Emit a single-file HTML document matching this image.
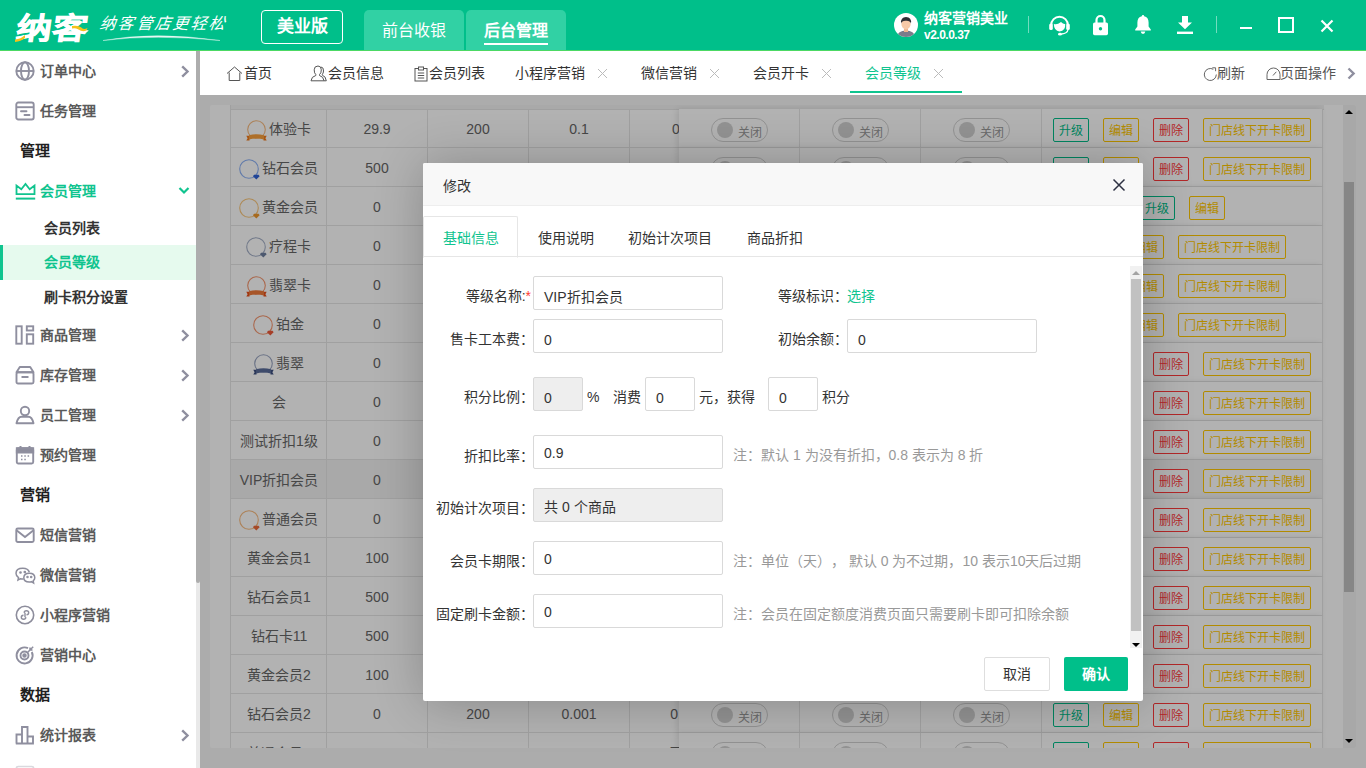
<!DOCTYPE html>
<html lang="zh-CN">
<head>
<meta charset="utf-8">
<title>纳客</title>
<style>
*{box-sizing:border-box;margin:0;padding:0}
html,body{width:1366px;height:768px;overflow:hidden;background:#fff}
body{font-family:"Liberation Sans",sans-serif;font-size:14px;color:#333;position:relative;text-spacing-trim:space-all}
a{text-decoration:none;color:inherit}
i,em{font-style:normal}
.abs{position:absolute}

/* ---------- header ---------- */
#hd{position:absolute;left:0;top:0;width:1366px;height:51px;background:#00bf8a;border-bottom:1px solid #4cd964;color:#fff}
#logo{position:absolute;left:14px;top:11px;-webkit-text-stroke:.7px #fff;font-size:30px;font-weight:900;letter-spacing:0;line-height:36px;transform:scaleX(1.18) skewX(-7deg);transform-origin:left bottom}
#slogan{position:absolute;left:100px;top:13px;font-size:16px;letter-spacing:2.2px;line-height:22px;font-style:italic;font-weight:300;transform:skewX(-8deg)}
#ver{position:absolute;left:261px;top:10px;width:82px;height:34px;border:1px solid #fff;border-radius:4px;text-align:center;line-height:32px;font-size:17px;font-weight:bold}
.htab{position:absolute;top:10px;height:40px;width:100px;background:#31d1a4;border-radius:5px 5px 0 0;text-align:center;font-size:16px;line-height:41px}
#uname{position:absolute;left:924px;top:10px;font-size:14px;line-height:17px;font-weight:bold}
#uver{position:absolute;left:924px;top:28px;font-size:12px;line-height:14px;font-weight:bold;letter-spacing:-.5px}
.vdiv{position:absolute;top:16px;width:1px;height:17px;background:rgba(255,255,255,.45)}

/* ---------- sidebar ---------- */
#side{position:absolute;left:0;top:51px;width:196px;height:717px;background:#fff;overflow:hidden}
#sbar{position:absolute;left:196px;top:51px;width:4px;height:717px;background:#e9e9e9}
#sbar i{position:absolute;left:0;top:0;width:4px;height:532px;background:#adadad;border-radius:0 0 2px 2px}
.mi{position:absolute;left:0;width:196px;height:40px;line-height:40px;font-weight:bold;color:#5a5a5a;font-size:14px}
.mi svg.ic{position:absolute;left:15px;top:10px}
.mi span{position:absolute;left:40px;top:0}
.mi svg.ar{position:absolute;left:180px;top:14px}
.mh{position:absolute;left:20px;height:40px;line-height:40px;font-weight:bold;font-size:15px;color:#1f1f1f}
.sm{position:absolute;left:0;width:196px;height:35px;line-height:35px;font-weight:bold;color:#333;padding-left:44px}
.sm.on{background:#e6faee;color:#10c48f;border-left:3px solid #10c48f;padding-left:41px}

/* ---------- tab bar ---------- */
#tabs{position:absolute;left:200px;top:51px;width:1166px;height:44px;background:#fff;color:#333}
.tb{position:absolute;top:0;height:44px;line-height:44px;font-size:14px;white-space:nowrap}
.tb svg{position:absolute}
.tx{position:absolute;top:17px}

/* ---------- content ---------- */
#content{position:absolute;left:200px;top:95px;width:1166px;height:673px;background:#f7f7f7;overflow:hidden}
#card{position:absolute;left:10px;top:10px;width:1146px;height:643px;background:#fff;overflow:hidden;border-radius:2px}
#tbl{position:absolute;left:20px;top:0;width:1093px;height:643px;border-left:1px solid #e6e6e6}
#tbl:before{content:"";position:absolute;left:0;top:0;width:1093px;height:4px;border-bottom:1px solid #e6e6e6;background:#f2f2f2}
.tr{position:absolute;left:0;width:1092px;height:39px}
.tr.hl{background:#f2f2f2}
.td{position:absolute;top:0;height:39px;border-right:1px solid #e6e6e6;border-bottom:1px solid #e6e6e6;text-align:center;line-height:38px;color:#666;font-size:14px;white-space:nowrap;overflow:hidden}
.c2,.c3,.c4,.c5{line-height:40px}
.c1{left:0;width:96px}.c2{left:96px;width:101px}.c3{left:197px;width:101px}.c4{left:298px;width:101px}.c5{left:399px;width:93px}
.fx{position:absolute;left:448px;top:0;width:644px;height:39px;background:#fff;box-shadow:-2px 0 6px rgba(0,0,0,.10)}
.hl .fx{background:#f2f2f2}
.s1{left:0;width:121px}.s2{left:121px;width:121px}.s3{left:242px;width:121px}.op{left:363px;width:281px}
.lv{vertical-align:middle;margin-right:1px;position:relative;top:1px}
.c1 span{vertical-align:middle;margin-left:1px}
.sw{display:inline-block;position:relative;width:57px;height:24px;border:1px solid #d2d2d2;border-radius:12px;background:#fff;vertical-align:middle;top:1px}
.sw i{position:absolute;left:5px;top:3px;width:16px;height:16px;border-radius:50%;background:#d2d2d2}
.sw em{position:absolute;left:26px;top:3px;line-height:22px;font-size:12px;color:#999}
.b{display:inline-block;height:24px;line-height:24px;padding:0 5px;font-size:12px;border:1px solid;border-radius:2px;margin:0 7px;vertical-align:middle;background:#fff;position:relative;top:1px}
.b.g{color:#00bf8a;border-color:#00bf8a}
.b.y{color:#ffc800;border-color:#ffc800}
.b.r{color:#ff3a3c;border-color:#ff3a3c}
#vs{position:absolute;left:1133px;top:0;width:13px;height:643px;background:#f1f1f1}
#vs .th{position:absolute;left:1px;top:77px;width:10px;height:410px;background:#c1c1c1}
#vs .up{position:absolute;left:2px;top:5px;width:0;height:0;border:4px solid transparent;border-bottom:4px solid #000;border-top:0}
#vs .dn{position:absolute;left:2px;top:634px;width:0;height:0;border:4px solid transparent;border-top:4px solid #000;border-bottom:0}
#shade{position:absolute;left:200px;top:95px;width:1166px;height:673px;background:rgba(0,0,0,.3)}

/* ---------- modal ---------- */
#modal{position:absolute;left:423px;top:163px;width:720px;height:538px;background:#fff;border-radius:2px;box-shadow:1px 1px 50px rgba(0,0,0,.24)}
#mt{position:absolute;left:0;top:0;width:720px;height:43px;background:#f8f8f8;border-bottom:1px solid #eee;border-radius:2px 2px 0 0;line-height:46px;padding-left:20px;color:#333;font-size:14px}
#mtabs{position:absolute;left:0;top:53px;width:720px;height:41px;border-bottom:1px solid #e6e6e6}
#mtabs .on{position:absolute;left:0;top:0;width:95px;height:42px;border:1px solid #e6e6e6;border-bottom-color:#fff;border-radius:2px 2px 0 0}
#mtabs span{position:absolute;top:0;line-height:44px;font-size:14px;color:#333;white-space:nowrap}
.lb{position:absolute;width:110px;text-align:right;font-size:14px;color:#333;line-height:20px;white-space:nowrap}
.in{position:absolute;height:34px;border:1px solid #d9d9d9;border-radius:2px;background:#fff;padding-left:10px;line-height:40px;font-size:14px;color:#333;white-space:nowrap}
.in.dis{background:#eee}
.t{position:absolute;font-size:14px;line-height:20px;white-space:nowrap;color:#333}
.note{color:#999}
#ms{position:absolute;left:707px;top:103px;width:12px;height:382px;background:#f1f1f1}
#ms .th{position:absolute;left:1px;top:13px;width:10px;height:352px;background:#c1c1c1}
#ms .up{position:absolute;left:2px;top:5px;width:0;height:0;border:4px solid transparent;border-bottom:4px solid #a3a3a3;border-top:0}
#ms .dn{position:absolute;left:2px;top:377px;width:0;height:0;border:4px solid transparent;border-top:4px solid #000;border-bottom:0}
.mb{position:absolute;top:494px;height:34px;border-radius:2px;text-align:center;line-height:33px;font-size:14px}
</style>
</head>
<body>

<!-- ================= HEADER ================= -->
<div id="hd">
  <div id="logo">纳客</div>
  <svg class="abs" style="left:12px;top:19px" width="80" height="26" viewBox="0 0 80 26"><path d="M3 20.500 Q9 20 13 16 L13 19 Q9 22.500 3 23 Z" fill="#f5c21b"/><path d="M60 7 Q67 6 70.500 9.500 Q72.500 10.500 75.500 9 L74.500 11.500 Q70.500 13.500 66.500 10.500 Q63.500 8.500 60 9.500 Z" fill="#f5c21b"/></svg>
  <div id="slogan">纳客管店更轻松</div>
  <svg class="abs" style="left:100px;top:34px" width="125" height="9" viewBox="0 0 125 9"><path d="M3 6.5 Q55 -3 120 6.5 Q55 0 3 6.5 Z" fill="#fff" stroke="#fff" stroke-width=".4" opacity=".9"/></svg>
  <div id="ver">美业版</div>
  <div class="htab" style="left:364px">前台收银</div>
  <div class="htab" style="left:466px;width:100px;font-weight:bold;font-size:16px"><span style="display:inline-block;height:35px;border-bottom:2px solid #fff">后台管理</span></div>

  <!-- avatar -->
  <svg class="abs" style="left:894px;top:13px" width="24" height="24" viewBox="0 0 24 24">
    <defs><clipPath id="avc"><circle cx="12" cy="12" r="12"/></clipPath></defs>
    <circle cx="12" cy="12" r="12" fill="#fff"/>
    <g clip-path="url(#avc)">
      <path d="M3 25 Q3 17.5 12 17.5 Q21 17.5 21 25 Z" fill="#7b7b8b"/>
      <rect x="10" y="14" width="4" height="5" fill="#f0b48f"/>
      <ellipse cx="12" cy="11" rx="4.6" ry="5.4" fill="#f7c9a8"/>
      <path d="M7 10.5 Q6.5 4 12 4 Q17.8 4 17 10.5 Q16 7.5 12 7.8 Q8 7.5 7 10.5 Z" fill="#2e2e35"/>
    </g>
  </svg>
  <div id="uname">纳客营销美业</div>
  <div id="uver">v2.0.0.37</div>
  <div class="vdiv" style="left:1028px"></div>

  <!-- headset -->
  <svg class="abs" style="left:1048px;top:13px" width="23" height="24" viewBox="0 0 23 24">
    <path d="M3.2 12 A8.3 8.3 0 0 1 19.8 12" fill="none" stroke="#fff" stroke-width="2"/>
    <rect x="1.2" y="10.5" width="3.6" height="6.5" rx="1.6" fill="#fff"/>
    <rect x="18.2" y="10.5" width="3.6" height="6.5" rx="1.6" fill="#fff"/>
    <path d="M5.8 10.8 Q8.5 12.5 13 9 Q15.5 11.5 17.2 11 Q17.8 17.8 11.5 18.6 Q6 18 5.8 10.8 Z" fill="#fff"/>
    <path d="M20 16.5 Q19.5 20.5 13.5 21" fill="none" stroke="#fff" stroke-width="1.3"/>
    <ellipse cx="12" cy="21.2" rx="2" ry="1.4" fill="#fff"/>
  </svg>
  <!-- lock -->
  <svg class="abs" style="left:1092px;top:14px" width="17" height="22" viewBox="0 0 17 22">
    <path d="M4.5 9 V6 A4 4 0 0 1 12.500 6 V9" fill="none" stroke="#fff" stroke-width="2.2"/>
    <rect x="1" y="8.600" width="15" height="12.6" rx="1.6" fill="#fff"/>
    <circle cx="8.5" cy="14.8" r="1.7" fill="#00bf8a"/>
  </svg>
  <!-- bell -->
  <svg class="abs" style="left:1134px;top:14px" width="18" height="21" viewBox="0 0 18 21">
    <path d="M9 1 Q10.2 1 10.2 2.300 Q14.6 3.400 14.600 8.500 V12.500 L16.800 15.600 V16.400 H1.200 V15.600 L3.400 12.500 V8.500 Q3.400 3.400 7.800 2.300 Q7.800 1 9 1 Z" fill="#fff"/>
    <path d="M6.700 17.600 H11.300 Q11 20 9 20 Q7 20 6.700 17.600 Z" fill="#fff"/>
  </svg>
  <!-- download -->
  <svg class="abs" style="left:1176px;top:15px" width="18" height="20" viewBox="0 0 18 20">
    <path d="M6 1 H12 V7.500 H16 L9 14.200 L2 7.500 H6 Z" fill="#fff"/>
    <rect x="1" y="16.600" width="16" height="2.400" fill="#fff"/>
  </svg>
  <div class="vdiv" style="left:1216px"></div>
  <div class="abs" style="left:1240px;top:27px;width:12px;height:2px;background:#fff"></div>
  <div class="abs" style="left:1278px;top:17px;width:16px;height:16px;border:2px solid #fff"></div>
  <svg class="abs" style="left:1320px;top:19px" width="14" height="14" viewBox="0 0 14 14"><path d="M1.500 1.500 L12.500 12.500 M12.500 1.500 L1.500 12.500" stroke="#fff" stroke-width="2.200"/></svg>
</div>

<!-- ================= SIDEBAR ================= -->
<div id="side">
  <div class="mi" style="top:0"><svg class="ic" width="20" height="20" viewBox="0 0 20 20" fill="none" stroke="#8f8f9f" stroke-width="1.900"><circle cx="10" cy="10" r="8.700"/><path d="M1.500 10 H18.500"/><ellipse cx="10" cy="10" rx="4" ry="8.700"/></svg><span>订单中心</span><svg class="ar" width="10" height="13" viewBox="0 0 10 13"><path d="M2.200 1.400 L7.500 6.500 L2.200 11.600" fill="none" stroke="#8f8f9f" stroke-width="2.400"/></svg></div>
  <div class="mi" style="top:40px"><svg class="ic" width="20" height="20" viewBox="0 0 20 20" fill="none" stroke="#8f8f9f" stroke-width="1.900"><rect x="1.300" y="1.500" width="17.400" height="17" rx="2"/><path d="M1.300 6.200 H18.700"/><path d="M6 10.300 H11.500 M9.500 14 H14.500" stroke-width="1.900" stroke-linecap="round"/></svg><span>任务管理</span></div>
  <div class="mh" style="top:80px">管理</div>
  <div class="mi" style="top:120px;color:#10c48f"><svg class="ic" width="21" height="20" viewBox="0 0 21 20" fill="none" stroke="#10c48f" stroke-width="1.800"><path d="M1.500 13.200 V4.500 L6.300 8.300 L10.500 3 L14.700 8.300 L19.500 4.500 V13.200 Z" stroke-linejoin="miter"/><path d="M0.800 17.600 H20.200" stroke-width="2"/></svg><span>会员管理</span><svg class="ar" style="left:178px;top:15px" width="12" height="9" viewBox="0 0 12 9"><path d="M1.500 2 L6 6.500 L10.500 2" fill="none" stroke="#10c48f" stroke-width="2.200"/></svg></div>
  <div class="sm" style="top:160px">会员列表</div>
  <div class="sm on" style="top:194px">会员等级</div>
  <div class="sm" style="top:229px">刷卡积分设置</div>
  <div class="mi" style="top:264px"><svg class="ic" width="20" height="20" viewBox="0 0 20 20" fill="none" stroke="#8f8f9f" stroke-width="1.900"><rect x="1.300" y="1.300" width="5.400" height="17.400"/><rect x="11.800" y="1.300" width="6.400" height="4.200"/><rect x="11.800" y="9.300" width="6.400" height="9.400"/></svg><span>商品管理</span><svg class="ar" width="10" height="13" viewBox="0 0 10 13"><path d="M2.200 1.400 L7.500 6.500 L2.200 11.600" fill="none" stroke="#8f8f9f" stroke-width="2.400"/></svg></div>
  <div class="mi" style="top:304px"><svg class="ic" width="20" height="20" viewBox="0 0 20 20" fill="none" stroke="#8f8f9f" stroke-width="1.900"><path d="M1.500 7.200 L4.800 2 H15.200 L18.500 7.200 Z" stroke-linejoin="round"/><rect x="1.500" y="7.200" width="17" height="11.300" rx="1.500"/><path d="M6.500 12 H13.500" stroke-width="2"/></svg><span>库存管理</span><svg class="ar" width="10" height="13" viewBox="0 0 10 13"><path d="M2.200 1.400 L7.500 6.500 L2.200 11.600" fill="none" stroke="#8f8f9f" stroke-width="2.400"/></svg></div>
  <div class="mi" style="top:344px"><svg class="ic" width="20" height="20" viewBox="0 0 20 20" fill="none" stroke="#8f8f9f" stroke-width="1.900"><circle cx="10" cy="6" r="4.200"/><path d="M1.500 18.300 Q3 11.800 6.500 11.800 H13.500 Q17 11.800 18.500 18.300 Z" stroke-linejoin="round"/></svg><span>员工管理</span><svg class="ar" width="10" height="13" viewBox="0 0 10 13"><path d="M2.200 1.400 L7.500 6.500 L2.200 11.600" fill="none" stroke="#8f8f9f" stroke-width="2.400"/></svg></div>
  <div class="mi" style="top:384px"><svg class="ic" width="20" height="20" viewBox="0 0 20 20" fill="none" stroke="#8f8f9f" stroke-width="1.900"><rect x="1.800" y="3.200" width="16.400" height="15.300" rx="1.500"/><path d="M1.800 3.200 H18.200 V7.500 H1.800 Z" fill="#8d8d9c"/><path d="M5.500 1 V4 M14.500 1 V4" stroke-width="2"/><path d="M6 11 H7.500 M9.300 11 H10.800 M12.600 11 H14.100 M6 14.500 H7.500 M9.300 14.500 H10.800" stroke-width="1.600"/></svg><span>预约管理</span></div>
  <div class="mh" style="top:424px">营销</div>
  <div class="mi" style="top:464px"><svg class="ic" width="20" height="20" viewBox="0 0 20 20" fill="none" stroke="#8f8f9f" stroke-width="1.900"><rect x="1.300" y="3.500" width="17.400" height="13.500" rx="1.500"/><path d="M1.800 5.500 L10 12 L18.200 5.500"/></svg><span>短信营销</span></div>
  <div class="mi" style="top:504px"><svg class="ic" width="21" height="20" viewBox="0 0 21 20" fill="none" stroke="#8d8d9c" stroke-width="1.500"><path d="M8.500 14 Q6.800 14.200 5.500 13.700 L3 15 L3.500 12.600 Q1 10.800 1 8.200 Q1 3.200 7.800 3.200 Q13.200 3.200 14.300 7.200"/><path d="M19.800 12.800 Q19.800 8.200 14.300 8.200 Q8.800 8.200 8.800 12.800 Q8.800 17 14.300 17 Q15.500 17 16.300 16.700 L18.600 18 L18.200 15.800 Q19.800 14.600 19.800 12.800 Z"/><circle cx="5.500" cy="7.500" r=".6" fill="#8d8d9c"/><circle cx="9.800" cy="7" r=".6" fill="#8d8d9c"/><circle cx="12.500" cy="12" r=".5" fill="#8d8d9c"/><circle cx="16.200" cy="12" r=".5" fill="#8d8d9c"/></svg><span>微信营销</span></div>
  <div class="mi" style="top:544px"><svg class="ic" width="20" height="20" viewBox="0 0 20 20" fill="none" stroke="#8d8d9c" stroke-width="1.600"><circle cx="10" cy="10" r="8.700"/><path d="M10.800 12.300 Q10.800 14.200 8.600 14.200 Q6.300 14.200 6.300 12.300 Q6.300 10.500 8.500 10.300 M9.200 7.700 Q9.200 5.800 11.400 5.800 Q13.700 5.800 13.700 7.700 Q13.700 9.500 11.500 9.700 M10 7.700 V12.300" stroke-width="1.400"/></svg><span>小程序营销</span></div>
  <div class="mi" style="top:584px"><svg class="ic" width="20" height="20" viewBox="0 0 20 20" fill="none" stroke="#8f8f9f" stroke-width="1.900"><path d="M16.800 7 A8 8 0 1 1 13 3.200"/><circle cx="9.500" cy="10.500" r="4"/><circle cx="9.500" cy="10.500" r="1.300" fill="#8d8d9c"/><path d="M12.500 7.500 L18.200 1.800 M15 5 L15 2.500 M15 5 L17.500 5" stroke-width="1.500"/></svg><span>营销中心</span></div>
  <div class="mh" style="top:624px">数据</div>
  <div class="mi" style="top:664px"><svg class="ic" width="20" height="20" viewBox="0 0 20 20" fill="none" stroke="#8f8f9f" stroke-width="1.900"><path d="M1.500 18.500 V9.500 H7 V18.500 M7 18.500 V2 H12.500 V18.500 M12.500 18.500 V11.500 H18 V18.500 M0.800 18.500 H18.900"/></svg><span>统计报表</span><svg class="ar" width="10" height="13" viewBox="0 0 10 13"><path d="M2.200 1.400 L7.500 6.500 L2.200 11.600" fill="none" stroke="#8f8f9f" stroke-width="2.400"/></svg></div>
  <div class="mi" style="top:704px"><svg class="ic" width="20" height="20" viewBox="0 0 20 20" fill="none" stroke="#d9d9de" stroke-width="1.700"><rect x="1.300" y="1.500" width="17.400" height="17" rx="2"/></svg></div>
</div>
<div id="sbar"><i></i></div>

<!-- ================= TAB BAR ================= -->
<div id="tabs">
  <div class="tb" style="left:26px"><svg style="left:0;top:15px" width="17" height="16" viewBox="0 0 17 16" fill="none" stroke="#555" stroke-width="1"><path d="M1 7.500 L8.500 1 L16 7.500"/><path d="M3.200 6.500 V14.500 H13.800 V6.500"/></svg><span style="margin-left:18px">首页</span></div>
  <div class="tb" style="left:110px"><svg style="left:0;top:14px" width="17" height="17" viewBox="0 0 17 17" fill="none" stroke="#555" stroke-width="1"><path d="M8 1 Q11.300 1 11.300 4.800 Q11.300 8.500 9.500 9.500 V10.500 Q13.500 11.500 14 15.800 H1 Q1.500 11.500 5.800 10.500 V9.500 Q4.200 8.500 4.200 4.800 Q4.200 1 8 1 Z"/><path d="M11 2 Q13.800 2.300 13.500 6 Q13.300 8.500 12.300 9.300 V10.200 Q15.800 11.200 16.300 15.800 H14"/></svg><span style="margin-left:18px">会员信息</span></div>
  <div class="tb" style="left:214px"><svg style="left:0;top:15px" width="14" height="16" viewBox="0 0 14 16" fill="none" stroke="#555" stroke-width="1"><rect x="1" y="2.500" width="12" height="12.500"/><rect x="4.500" y="1" width="5" height="3" fill="#fff"/><path d="M3.800 7 H10.200 M3.800 9.500 H10.200 M3.800 12 H10.200"/></svg><span style="margin-left:15px">会员列表</span></div>
  <div class="tb" style="left:315px">小程序营销</div><svg class="tx" style="left:397px" width="11" height="11" viewBox="0 0 11 11"><path d="M1 1 L10 10 M10 1 L1 10" stroke="#bbb" stroke-width="1"/></svg>
  <div class="tb" style="left:441px">微信营销</div><svg class="tx" style="left:509px" width="11" height="11" viewBox="0 0 11 11"><path d="M1 1 L10 10 M10 1 L1 10" stroke="#bbb" stroke-width="1"/></svg>
  <div class="tb" style="left:553px">会员开卡</div><svg class="tx" style="left:621px" width="11" height="11" viewBox="0 0 11 11"><path d="M1 1 L10 10 M10 1 L1 10" stroke="#bbb" stroke-width="1"/></svg>
  <div class="tb" style="left:665px;color:#10c48f">会员等级</div><svg class="tx" style="left:733px" width="11" height="11" viewBox="0 0 11 11"><path d="M1 1 L10 10 M10 1 L1 10" stroke="#bbb" stroke-width="1"/></svg>
  <div class="abs" style="left:650px;top:40px;width:112px;height:2px;background:#10c48f"></div>
  <div class="tb" style="left:1004px;color:#555"><svg style="left:-1px;top:16px" width="15" height="15" viewBox="0 0 15 15" fill="none" stroke="#666" stroke-width="1"><path d="M13.300 7.500 A6 6 0 1 1 10.300 2.300"/><path d="M9.300 0.800 H12.600 V4.200" /></svg><span style="margin-left:13px">刷新</span></div>
  <div class="tb" style="left:1066px;color:#555"><svg style="left:0;top:16px" width="15" height="14" viewBox="0 0 15 14" fill="none" stroke="#666" stroke-width="1"><path d="M1 12.500 V7.500 A6.500 6.500 0 0 1 14 7.500 V12.500 Z" stroke-linejoin="round"/><path d="M7 8.500 L10.300 4.800"/></svg><span style="margin-left:14px">页面操作</span></div>
  <svg class="abs" style="left:1146px;top:16px" width="10" height="13" viewBox="0 0 10 13"><path d="M2.500 1.500 L7.600 6.500 L2.500 11.500" fill="none" stroke="#8f8f9f" stroke-width="2.400"/></svg>
</div>

<!-- ================= CONTENT ================= -->
<div id="content">
  <div id="card">
    <div id="tbl">
<div class="tr" style="top:4px"><div class="td c1"><svg class="lv" width="21" height="21" viewBox="0 0 21 21"><circle cx="10.5" cy="9.5" r="8.8" fill="none" stroke="#f5a95f" stroke-width="1.1" stroke-opacity=".8"/><path d="M0.3 15.8 L3.5 15.8 L3.5 20.6 L0.3 20.6 L1.6 18.2 Z M20.7 15.8 L17.5 15.8 L17.5 20.6 L20.7 20.6 L19.4 18.2 Z" fill="#f07a1c"/><path d="M3 15.2 Q10.5 13.2 18 15.2 L18 19.6 Q10.5 17.6 3 19.6 Z" fill="#f9a03c"/></svg><span>体验卡</span></div><div class="td c2">29.9</div><div class="td c3">200</div><div class="td c4">0.1</div><div class="td c5">0</div><div class="fx"><div class="td s1"><span class="sw"><i></i><em>关闭</em></span></div><div class="td s2"><span class="sw"><i></i><em>关闭</em></span></div><div class="td s3"><span class="sw"><i></i><em>关闭</em></span></div><div class="td op"><a class="b g">升级</a><a class="b y">编辑</a><a class="b r">删除</a><a class="b y w">门店线下开卡限制</a></div></div></div>
<div class="tr" style="top:43px"><div class="td c1"><svg class="lv" width="21" height="21" viewBox="0 0 21 21"><circle cx="10" cy="10" r="9.3" fill="none" stroke="#6f9cf0" stroke-width="1.1" stroke-opacity=".8"/><path d="M15 15.800 L19.600 15.800 L20.600 17.200 L17.300 20.600 L14 17.200 Z" fill="#2f62d8"/></svg><span>钻石会员</span></div><div class="td c2">500</div><div class="td c3">700</div><div class="td c4">0</div><div class="td c5">0</div><div class="fx"><div class="td s1"><span class="sw"><i></i><em>关闭</em></span></div><div class="td s2"><span class="sw"><i></i><em>关闭</em></span></div><div class="td s3"><span class="sw"><i></i><em>关闭</em></span></div><div class="td op"><a class="b g">升级</a><a class="b y">编辑</a><a class="b r">删除</a><a class="b y w">门店线下开卡限制</a></div></div></div>
<div class="tr" style="top:82px"><div class="td c1"><svg class="lv" width="21" height="21" viewBox="0 0 21 21"><circle cx="10" cy="10" r="9.3" fill="none" stroke="#f6b85c" stroke-width="1.1" stroke-opacity=".8"/><path d="M15 15.800 L19.600 15.800 L20.600 17.200 L17.300 20.600 L14 17.200 Z" fill="#f0982c"/></svg><span>黄金会员</span></div><div class="td c2">0</div><div class="td c3">0</div><div class="td c4">0</div><div class="td c5">0</div><div class="fx"><div class="td s1"><span class="sw"><i></i><em>关闭</em></span></div><div class="td s2"><span class="sw"><i></i><em>关闭</em></span></div><div class="td s3"><span class="sw"><i></i><em>关闭</em></span></div><div class="td op"><a class="b g">升级</a><a class="b y">编辑</a></div></div></div>
<div class="tr" style="top:121px"><div class="td c1"><svg class="lv" width="21" height="21" viewBox="0 0 21 21"><circle cx="10" cy="10" r="9.3" fill="none" stroke="#8d9bb8" stroke-width="1.1" stroke-opacity=".8"/><path d="M15 15.800 L19.600 15.800 L20.600 17.200 L17.300 20.600 L14 17.200 Z" fill="#6d7f9f"/></svg><span>疗程卡</span></div><div class="td c2">0</div><div class="td c3">0</div><div class="td c4">0</div><div class="td c5">0</div><div class="fx"><div class="td s1"><span class="sw"><i></i><em>关闭</em></span></div><div class="td s2"><span class="sw"><i></i><em>关闭</em></span></div><div class="td s3"><span class="sw"><i></i><em>关闭</em></span></div><div class="td op"><a class="b g" style="visibility:hidden">升级</a><a class="b y">编辑</a><a class="b y w">门店线下开卡限制</a></div></div></div>
<div class="tr" style="top:160px"><div class="td c1"><svg class="lv" width="21" height="21" viewBox="0 0 21 21"><circle cx="10.5" cy="9.5" r="8.8" fill="none" stroke="#f07a4a" stroke-width="1.1" stroke-opacity=".8"/><path d="M0.3 15.8 L3.5 15.8 L3.5 20.6 L0.3 20.6 L1.6 18.2 Z M20.7 15.8 L17.5 15.8 L17.5 20.6 L20.7 20.6 L19.4 18.2 Z" fill="#e8501a"/><path d="M3 15.2 Q10.5 13.2 18 15.2 L18 19.6 Q10.5 17.6 3 19.6 Z" fill="#f07a3a"/></svg><span>翡翠卡</span></div><div class="td c2">0</div><div class="td c3">0</div><div class="td c4">0</div><div class="td c5">0</div><div class="fx"><div class="td s1"><span class="sw"><i></i><em>关闭</em></span></div><div class="td s2"><span class="sw"><i></i><em>关闭</em></span></div><div class="td s3"><span class="sw"><i></i><em>关闭</em></span></div><div class="td op"><a class="b g" style="visibility:hidden">升级</a><a class="b y">编辑</a><a class="b y w">门店线下开卡限制</a></div></div></div>
<div class="tr" style="top:199px"><div class="td c1"><svg class="lv" width="21" height="21" viewBox="0 0 21 21"><circle cx="10" cy="10" r="9.3" fill="none" stroke="#f07a4a" stroke-width="1.1" stroke-opacity=".8"/><path d="M15 15.800 L19.600 15.800 L20.600 17.200 L17.300 20.600 L14 17.200 Z" fill="#ee5a3a"/></svg><span>铂金</span></div><div class="td c2">0</div><div class="td c3">0</div><div class="td c4">0</div><div class="td c5">0</div><div class="fx"><div class="td s1"><span class="sw"><i></i><em>关闭</em></span></div><div class="td s2"><span class="sw"><i></i><em>关闭</em></span></div><div class="td s3"><span class="sw"><i></i><em>关闭</em></span></div><div class="td op"><a class="b g" style="visibility:hidden">升级</a><a class="b y">编辑</a><a class="b y w">门店线下开卡限制</a></div></div></div>
<div class="tr" style="top:238px"><div class="td c1"><svg class="lv" width="21" height="21" viewBox="0 0 21 21"><circle cx="10.5" cy="9.5" r="8.8" fill="none" stroke="#7f8db0" stroke-width="1.1" stroke-opacity=".8"/><path d="M0.3 15.8 L3.5 15.8 L3.5 20.6 L0.3 20.6 L1.6 18.2 Z M20.7 15.8 L17.5 15.8 L17.5 20.6 L20.7 20.6 L19.4 18.2 Z" fill="#3d4f80"/><path d="M3 15.2 Q10.5 13.2 18 15.2 L18 19.6 Q10.5 17.6 3 19.6 Z" fill="#5a6c9a"/></svg><span>翡翠</span></div><div class="td c2">0</div><div class="td c3">0</div><div class="td c4">0</div><div class="td c5">0</div><div class="fx"><div class="td s1"><span class="sw"><i></i><em>关闭</em></span></div><div class="td s2"><span class="sw"><i></i><em>关闭</em></span></div><div class="td s3"><span class="sw"><i></i><em>关闭</em></span></div><div class="td op"><a class="b g">升级</a><a class="b y">编辑</a><a class="b r">删除</a><a class="b y w">门店线下开卡限制</a></div></div></div>
<div class="tr" style="top:277px"><div class="td c1"><span>会</span></div><div class="td c2">0</div><div class="td c3">0</div><div class="td c4">0</div><div class="td c5">0</div><div class="fx"><div class="td s1"><span class="sw"><i></i><em>关闭</em></span></div><div class="td s2"><span class="sw"><i></i><em>关闭</em></span></div><div class="td s3"><span class="sw"><i></i><em>关闭</em></span></div><div class="td op"><a class="b g">升级</a><a class="b y">编辑</a><a class="b r">删除</a><a class="b y w">门店线下开卡限制</a></div></div></div>
<div class="tr" style="top:316px"><div class="td c1"><span>测试折扣1级</span></div><div class="td c2">0</div><div class="td c3">0</div><div class="td c4">0</div><div class="td c5">0</div><div class="fx"><div class="td s1"><span class="sw"><i></i><em>关闭</em></span></div><div class="td s2"><span class="sw"><i></i><em>关闭</em></span></div><div class="td s3"><span class="sw"><i></i><em>关闭</em></span></div><div class="td op"><a class="b g">升级</a><a class="b y">编辑</a><a class="b r">删除</a><a class="b y w">门店线下开卡限制</a></div></div></div>
<div class="tr hl" style="top:355px"><div class="td c1"><span>VIP折扣会员</span></div><div class="td c2">0</div><div class="td c3">0</div><div class="td c4">0</div><div class="td c5">0</div><div class="fx"><div class="td s1"><span class="sw"><i></i><em>关闭</em></span></div><div class="td s2"><span class="sw"><i></i><em>关闭</em></span></div><div class="td s3"><span class="sw"><i></i><em>关闭</em></span></div><div class="td op"><a class="b g">升级</a><a class="b y">编辑</a><a class="b r">删除</a><a class="b y w">门店线下开卡限制</a></div></div></div>
<div class="tr" style="top:394px"><div class="td c1"><svg class="lv" width="21" height="21" viewBox="0 0 21 21"><circle cx="10" cy="10" r="9.3" fill="none" stroke="#f5a95f" stroke-width="1.1" stroke-opacity=".8"/><path d="M15 15.800 L19.600 15.800 L20.600 17.200 L17.300 20.600 L14 17.200 Z" fill="#ee6a3a"/></svg><span>普通会员</span></div><div class="td c2">0</div><div class="td c3">0</div><div class="td c4">0</div><div class="td c5">0</div><div class="fx"><div class="td s1"><span class="sw"><i></i><em>关闭</em></span></div><div class="td s2"><span class="sw"><i></i><em>关闭</em></span></div><div class="td s3"><span class="sw"><i></i><em>关闭</em></span></div><div class="td op"><a class="b g">升级</a><a class="b y">编辑</a><a class="b r">删除</a><a class="b y w">门店线下开卡限制</a></div></div></div>
<div class="tr" style="top:433px"><div class="td c1"><span>黄金会员1</span></div><div class="td c2">100</div><div class="td c3">0</div><div class="td c4">0</div><div class="td c5">0</div><div class="fx"><div class="td s1"><span class="sw"><i></i><em>关闭</em></span></div><div class="td s2"><span class="sw"><i></i><em>关闭</em></span></div><div class="td s3"><span class="sw"><i></i><em>关闭</em></span></div><div class="td op"><a class="b g">升级</a><a class="b y">编辑</a><a class="b r">删除</a><a class="b y w">门店线下开卡限制</a></div></div></div>
<div class="tr" style="top:472px"><div class="td c1"><span>钻石会员1</span></div><div class="td c2">500</div><div class="td c3">0</div><div class="td c4">0</div><div class="td c5">0</div><div class="fx"><div class="td s1"><span class="sw"><i></i><em>关闭</em></span></div><div class="td s2"><span class="sw"><i></i><em>关闭</em></span></div><div class="td s3"><span class="sw"><i></i><em>关闭</em></span></div><div class="td op"><a class="b g">升级</a><a class="b y">编辑</a><a class="b r">删除</a><a class="b y w">门店线下开卡限制</a></div></div></div>
<div class="tr" style="top:511px"><div class="td c1"><span>钻石卡11</span></div><div class="td c2">500</div><div class="td c3">0</div><div class="td c4">0</div><div class="td c5">0</div><div class="fx"><div class="td s1"><span class="sw"><i></i><em>关闭</em></span></div><div class="td s2"><span class="sw"><i></i><em>关闭</em></span></div><div class="td s3"><span class="sw"><i></i><em>关闭</em></span></div><div class="td op"><a class="b g">升级</a><a class="b y">编辑</a><a class="b r">删除</a><a class="b y w">门店线下开卡限制</a></div></div></div>
<div class="tr" style="top:550px"><div class="td c1"><span>黄金会员2</span></div><div class="td c2">100</div><div class="td c3">0</div><div class="td c4">0</div><div class="td c5">0</div><div class="fx"><div class="td s1"><span class="sw"><i></i><em>关闭</em></span></div><div class="td s2"><span class="sw"><i></i><em>关闭</em></span></div><div class="td s3"><span class="sw"><i></i><em>关闭</em></span></div><div class="td op"><a class="b g">升级</a><a class="b y">编辑</a><a class="b r">删除</a><a class="b y w">门店线下开卡限制</a></div></div></div>
<div class="tr" style="top:589px"><div class="td c1"><span>钻石会员2</span></div><div class="td c2">0</div><div class="td c3">200</div><div class="td c4">0.001</div><div class="td c5">0.</div><div class="fx"><div class="td s1"><span class="sw"><i></i><em>关闭</em></span></div><div class="td s2"><span class="sw"><i></i><em>关闭</em></span></div><div class="td s3"><span class="sw"><i></i><em>关闭</em></span></div><div class="td op"><a class="b g">升级</a><a class="b y">编辑</a><a class="b r">删除</a><a class="b y w">门店线下开卡限制</a></div></div></div>
<div class="tr" style="top:628px"><div class="td c1"><span>普通会员2</span></div><div class="td c2">0</div><div class="td c3">0</div><div class="td c4">0.001</div><div class="td c5">无</div><div class="fx"><div class="td s1"><span class="sw"><i></i><em>关闭</em></span></div><div class="td s2"><span class="sw"><i></i><em>关闭</em></span></div><div class="td s3"><span class="sw"><i></i><em>关闭</em></span></div><div class="td op"><a class="b g">升级</a><a class="b y">编辑</a><a class="b r">删除</a><a class="b y w">门店线下开卡限制</a></div></div></div>
    </div>
    <div id="vs"><div class="up"></div><div class="th"></div><div class="dn"></div></div>
  </div>
</div>
<div id="shade"></div>

<!-- ================= MODAL ================= -->
<div id="modal">
  <div id="mt">修改</div>
  <svg class="abs" style="left:689px;top:15px" width="14" height="14" viewBox="0 0 14 14"><path d="M1.500 1.500 L12.500 12.500 M12.500 1.500 L1.500 12.500" stroke="#2d3142" stroke-width="1.500"/></svg>
  <div id="mtabs">
    <div class="on"></div>
    <span style="left:20px;color:#10c48f">基础信息</span>
    <span style="left:115px">使用说明</span>
    <span style="left:205px">初始计次项目</span>
    <span style="left:324px">商品折扣</span>
  </div>

  <div class="lb" style="left:-2px;top:123px">等级名称:<b style="color:#ff3b30;font-weight:normal">*</b></div>
  <div class="in" style="left:110px;top:113px;width:190px">VIP折扣会员</div>
  <div class="lb" style="left:315px;top:123px">等级标识：</div>
  <div class="t" style="left:424px;top:123px;color:#10c48f">选择</div>

  <div class="lb" style="left:1px;top:166px">售卡工本费：</div>
  <div class="in" style="left:110px;top:156px;width:190px">0</div>
  <div class="lb" style="left:315px;top:166px">初始余额：</div>
  <div class="in" style="left:424px;top:156px;width:190px">0</div>

  <div class="lb" style="left:1px;top:224px">积分比例：</div>
  <div class="in dis" style="left:110px;top:214px;width:50px">0</div>
  <div class="t" style="left:164px;top:224px">%</div>
  <div class="t" style="left:190px;top:224px">消费</div>
  <div class="in" style="left:222px;top:214px;width:50px">0</div>
  <div class="t" style="left:276px;top:224px">元，获得</div>
  <div class="in" style="left:345px;top:214px;width:50px">0</div>
  <div class="t" style="left:399px;top:224px">积分</div>

  <div class="lb" style="left:1px;top:283px">折扣比率：</div>
  <div class="in" style="left:110px;top:272px;width:190px;line-height:34px">0.9</div>
  <div class="t note" style="left:310px;top:282px">注：默认 1 为没有折扣，0.8 表示为 8 折</div>

  <div class="lb" style="left:1px;top:335px">初始计次项目：</div>
  <div class="in dis" style="left:110px;top:325px;width:190px;line-height:36px">共 0 个商品</div>

  <div class="lb" style="left:1px;top:388px">会员卡期限：</div>
  <div class="in" style="left:110px;top:378px;width:190px;line-height:34px">0</div>
  <div class="t note" style="left:310px;top:388px">注：单位（天）， 默认 0 为不过期，10 表示10天后过期</div>

  <div class="lb" style="left:1px;top:441px">固定刷卡金额：</div>
  <div class="in" style="left:110px;top:431px;width:190px;line-height:34px">0</div>
  <div class="t note" style="left:310px;top:441px">注：会员在固定额度消费页面只需要刷卡即可扣除余额</div>

  <div id="ms"><div class="up"></div><div class="th"></div><div class="dn"></div></div>
  <div class="mb" style="left:561px;width:66px;border:1px solid #dedede;background:#fff;color:#333">取消</div>
  <div class="mb" style="left:641px;width:64px;background:#00bf8a;color:#fff;font-weight:bold;line-height:34px">确认</div>
</div>

</body>
</html>
